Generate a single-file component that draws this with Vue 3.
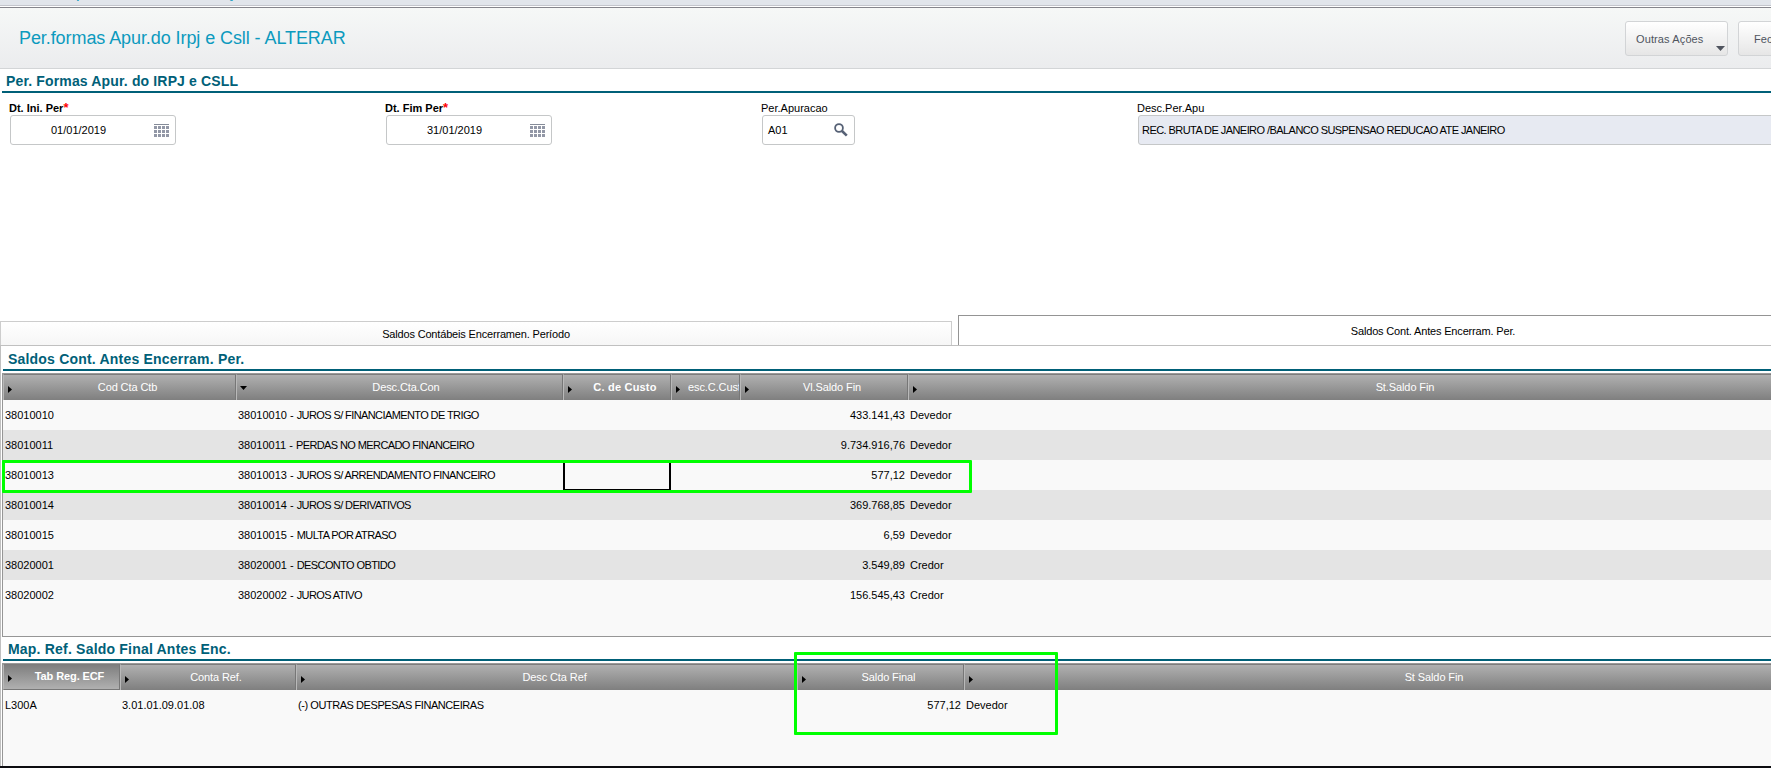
<template>
  <div class="screen">
    <div class="topbar">
      <span>p</span>
      <span>ç</span>
    </div>

    <header class="header">
      <h1 class="title">Per.formas Apur.do Irpj e Csll - ALTERAR</h1>
      <div class="actions">
        <button class="btn btn-menu">
          Outras Ações
          <svg class="btn-caret" viewBox="0 0 9 5"><path d="M0 0H9L4.5 5Z" fill="#4f545e" /></svg>
        </button>
        <button class="btn btn-close">Fechar</button>
      </div>
    </header>

    <h2 class="section section-main">Per. Formas Apur. do IRPJ e CSLL</h2>

    <div class="form">
      <div v-for="field in fields" :key="field.label" class="field">
        <label class="label" :class="{ required: field.required }">{{ field.label }}<i v-if="field.required">*</i></label>
        <div class="input" :class="'input-' + field.type">
          <span class="value">{{ field.value }}</span>
          <svg v-if="field.type === 'date'" class="calendar" viewBox="0 0 15 14">
            <rect width="15" height="1" fill="#858b98" />
            <template v-for="r in 3" :key="r">
              <rect v-for="c in 4" :key="c" :x="(c - 1) * 4" :y="r * 4 - 2" width="3" height="3" fill="#9297a6" />
            </template>
          </svg>
          <svg v-if="field.type === 'lookup'" class="search" viewBox="0 0 14 14">
            <circle cx="5" cy="5" r="3.9" fill="none" stroke="#566175" stroke-width="1.8" />
            <path d="M8 8L12.8 12.6" stroke="#566175" stroke-width="2.6" />
          </svg>
        </div>
      </div>
    </div>

    <nav class="tabs">
      <div class="tab">Saldos Contábeis Encerramen. Período</div>
      <div class="tab active">Saldos Cont. Antes Encerram. Per.</div>
    </nav>

    <main class="panel">
      <h2 class="section">Saldos Cont. Antes Encerram. Per.</h2>
      <div class="grid grid-balances">
        <div class="row head">
          <div v-for="(col, i) in balanceCols" :key="col" class="th" :class="{ bold: i === 2 }">
            <svg v-if="i === 1" class="sort-down" viewBox="0 0 7 4"><path d="M0 0H7L3.5 4Z" /></svg>
            <svg v-else class="sort" viewBox="0 0 4 7"><path d="M0 0L4 3.5L0 7Z" /></svg>
            <span>{{ col }}</span>
          </div>
        </div>
        <div v-for="row in balances" :key="row.code" class="row">
          <div class="td">{{ row.code }}</div>
          <div class="td">{{ row.code }} - <span class="caps">{{ row.desc }}</span></div>
          <div class="td" :class="{ selected: row.selected }"></div>
          <div class="td"></div>
          <div class="td num">{{ row.value }}</div>
          <div class="td">{{ row.status }}</div>
          <div v-if="row.selected" class="mark mark-row"></div>
        </div>
      </div>

      <h2 class="section section-refs">Map. Ref. Saldo Final Antes Enc.</h2>
      <div class="grid grid-refs">
        <div class="row head">
          <div v-for="(col, i) in refCols" :key="col" class="th" :class="{ bold: i === 0, pressed: i === 0 }">
            <svg class="sort" viewBox="0 0 4 7"><path d="M0 0L4 3.5L0 7Z" /></svg>
            <span>{{ col }}</span>
          </div>
        </div>
        <div class="row">
          <div class="td">L300A</div>
          <div class="td">3.01.01.09.01.08</div>
          <div class="td ref-desc">(-) OUTRAS DESPESAS FINANCEIRAS</div>
          <div class="td num">577,12</div>
          <div class="td">Devedor</div>
        </div>
        <div class="mark mark-total"></div>
      </div>
    </main>
  </div>
</template>

<script setup>
const fields = [
  { label: 'Dt. Ini. Per', value: '01/01/2019', type: 'date', required: true },
  { label: 'Dt. Fim Per', value: '31/01/2019', type: 'date', required: true },
  { label: 'Per.Apuracao', value: 'A01', type: 'lookup' },
  { label: 'Desc.Per.Apu', value: 'REC. BRUTA DE JANEIRO /BALANCO SUSPENSAO REDUCAO ATE JANEIRO', type: 'readonly' }
]

const balanceCols = ['Cod Cta Ctb', 'Desc.Cta.Con', 'C. de Custo', 'Desc.C.Custo', 'Vl.Saldo Fin', 'St.Saldo Fin']

const balances = [
  { code: '38010010', desc: 'JUROS S/ FINANCIAMENTO DE TRIGO', value: '433.141,43', status: 'Devedor' },
  { code: '38010011', desc: 'PERDAS NO MERCADO FINANCEIRO', value: '9.734.916,76', status: 'Devedor' },
  { code: '38010013', desc: 'JUROS S/ ARRENDAMENTO FINANCEIRO', value: '577,12', status: 'Devedor', selected: true },
  { code: '38010014', desc: 'JUROS S/ DERIVATIVOS', value: '369.768,85', status: 'Devedor' },
  { code: '38010015', desc: 'MULTA POR ATRASO', value: '6,59', status: 'Devedor' },
  { code: '38020001', desc: 'DESCONTO OBTIDO', value: '3.549,89', status: 'Credor' },
  { code: '38020002', desc: 'JUROS ATIVO', value: '156.545,43', status: 'Credor' }
]

const refCols = ['Tab Reg. ECF', 'Conta Ref.', 'Desc Cta Ref', 'Saldo Final', 'St Saldo Fin']
</script>

<style>
body {
  overflow: hidden;
}
</style>

<style scoped>
.screen {
  width: 100vw;
  height: 100vh;
  box-sizing: border-box;
  display: flex;
  flex-direction: column;
  overflow: hidden;
  background: #fff;
  border-bottom: 2px solid #0c0c10;
  font-family: "Liberation Sans", Arial, sans-serif;
  font-size: 11px;
  color: #000;
  white-space: nowrap;
}

/* only the descenders of the scrolled-off caption stay visible */
.topbar {
  flex: none;
  height: 5px;
  overflow: hidden;
  display: flex;
  align-items: flex-start;
  gap: 142px;
  padding-left: 76px;
  background: #e1e5eb;
  border-bottom: 1px solid #c3c5cc;
  font-size: 16px;
  line-height: 16px;
  color: #0c9abe;
}

.topbar span {
  margin-top: -15px;
}

.header {
  flex: none;
  height: 62px;
  box-sizing: border-box;
  margin-top: 1px;
  display: flex;
  justify-content: space-between;
  border-top: 1px solid #85858c;
  border-bottom: 1px solid #d3d5d7;
  background: linear-gradient(#f6f8f7, #ebecee);
}

.title {
  margin: 0;
  padding-left: 19px;
  font-size: 18px;
  font-weight: 400;
  line-height: 60px;
  letter-spacing: -0.08px;
  color: #0c9abe;
}

.actions {
  display: flex;
  gap: 10px;
  width: 146px;
  padding-top: 13px;
}

.btn {
  flex: none;
  position: relative;
  box-sizing: border-box;
  height: 35px;
  padding: 0 0 0 10px;
  border: 1px solid #d2d4d6;
  border-radius: 3px;
  background: linear-gradient(#fff, #e6e6e6);
  font: 11px "Liberation Sans", Arial, sans-serif;
  letter-spacing: 0.12px;
  color: #4f545e;
  text-align: left;
}

.btn-menu {
  width: 103px;
}

.btn-close {
  width: 80px;
  padding-left: 15px;
}

.btn-caret {
  position: absolute;
  right: 2px;
  bottom: 4px;
  width: 9px;
  height: 5px;
}

.section {
  flex: none;
  box-sizing: border-box;
  height: 25px;
  margin: 0 0 2px 3px;
  padding-left: 5px;
  border-bottom: 2px solid #006078;
  font-size: 14px;
  line-height: 26px;
  letter-spacing: 0.2px;
  color: #006078;
}

.section-main {
  height: 24px;
  margin: 0 0 0 2px;
  padding-left: 4px;
  line-height: 24px;
  letter-spacing: 0.15px;
}

.form {
  flex: none;
  display: flex;
  height: 222px;
  padding: 8px 0 0 10px;
  box-sizing: border-box;
}

.field {
  flex: none;
  width: 376px;
}

.field:last-child {
  width: 700px;
}

.label {
  display: block;
  height: 14px;
  margin-left: -1px;
  line-height: 15px;
}

.required {
  font-weight: 700;
}

.required i {
  font-style: normal;
  font-size: 13px;
  line-height: 1;
  color: #f00;
}

.input {
  display: flex;
  align-items: center;
  box-sizing: border-box;
  height: 30px;
  border: 1px solid #c5c7c8;
  border-radius: 3px;
}

.input-date {
  width: 166px;
  padding-left: 40px;
  padding-right: 6px;
  justify-content: space-between;
}

.input-lookup {
  width: 93px;
  padding: 0 6px 0 5px;
  justify-content: space-between;
}

.input-readonly {
  padding-left: 3px;
  background: #e7eaf2;
  letter-spacing: -0.56px;
}

.calendar {
  width: 15px;
  height: 14px;
  margin-top: 2px;
}

.search {
  width: 14px;
  height: 14px;
}

.tabs {
  flex: none;
  display: flex;
  align-items: flex-end;
  gap: 6px;
  height: 31px;
  box-sizing: border-box;
  border-bottom: 1px solid #c0c0c0;
}

.tab {
  flex: none;
  box-sizing: border-box;
  width: 952px;
  height: 24px;
  border: 1px solid #cdcdcd;
  border-bottom: 0;
  background: linear-gradient(#fff, #f6f6f6);
  line-height: 24px;
  letter-spacing: -0.17px;
  text-align: center;
}

.tab.active {
  width: 950px;
  height: 30px;
  border-color: #949494;
  background: #fff;
  line-height: 30px;
}

.panel {
  flex: 1;
  min-height: 0;
  display: flex;
  flex-direction: column;
  border-left: 1px solid #c0c0c0;
}

.panel .section {
  margin-left: 2px;
}

.panel .section-refs {
  height: 24px;
  line-height: 24px;
}

.grid {
  position: relative;
  box-sizing: border-box;
  margin-left: 1px;
  border-left: 1px solid #969696;
  border-top: 1px solid #9a9a9a;
  background: #f9f9f9;
}

.grid-balances {
  flex: none;
  height: 264px;
  border-bottom: 1px solid #969696;
}

.grid-refs {
  flex: 1;
}

.row {
  position: relative;
  display: grid;
  height: 30px;
}

.grid-balances .row {
  grid-template-columns: 233px 327px 108px 69px 168px 978px;
}

.grid-refs .row {
  grid-template-columns: 117px 176px 501px 167px 924px;
}

.row:nth-child(odd):not(.head) {
  background: #e4e4e4;
}

.head {
  height: 26px;
}

.th {
  display: flex;
  align-items: center;
  box-sizing: border-box;
  padding-left: 4px;
  border-top: 1px solid #7c7c7c;
  border-left: 1px solid #b9b9b9;
  border-right: 1px solid #777;
  background: linear-gradient(#b0b0b0, #7f7f7f);
  letter-spacing: -0.1px;
  color: #fff;
}

.th span {
  flex: 1;
  min-width: 0;
  margin: 0 0 2px 8px;
  display: flex;
  justify-content: center;
  overflow: hidden;
}

.th.bold {
  font-weight: 700;
  letter-spacing: 0.2px;
}

.grid-refs .th.bold {
  letter-spacing: -0.1px;
}

.th.pressed {
  border-bottom: 1px solid #777;
  background: linear-gradient(#7f7f7f, #b0b0b0);
}

.sort {
  flex: none;
  width: 4px;
  height: 7px;
  margin-top: 3px;
}

.sort-down {
  flex: none;
  width: 7px;
  height: 4px;
  margin: 0 -5px 0 -1px;
}

.td {
  padding-left: 2px;
  line-height: 31px;
}

.caps {
  letter-spacing: -0.6px;
}

.ref-desc {
  letter-spacing: -0.44px;
}

.num {
  padding-right: 3px;
  text-align: right;
}

.selected {
  border: 2px solid #000;
}

.mark {
  position: absolute;
  box-sizing: border-box;
  border: 3px solid #0f0;
  border-radius: 1px;
}

.mark-row {
  left: -1px;
  top: 0;
  width: 970px;
  height: 33px;
  z-index: 1;
}

.mark-total {
  left: 791px;
  top: -12px;
  width: 264px;
  height: 83px;
}
</style>
